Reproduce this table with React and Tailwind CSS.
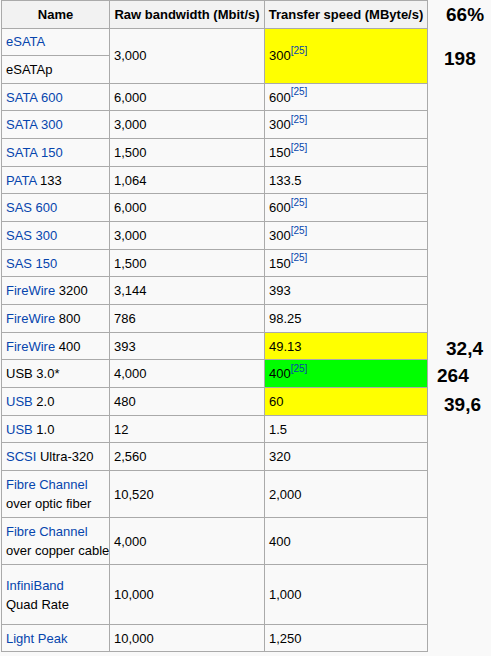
import React from "react";

const link = "text-[#0645ad]";
const cell = "border border-[#aaa] px-[4px] py-0 align-middle text-left whitespace-nowrap";
const head = "border border-[#aaa] px-[2px] py-0 align-middle text-center whitespace-nowrap bg-[#f2f2f2] font-bold";
const note = "border-0 p-0 align-middle text-[19px] font-bold leading-none text-black";

const Ref = () => (
  <sup className="relative -top-[1px] text-[10px] text-[#0645ad] align-super leading-none">[25]</sup>
);

const rows = [
  { name: <span className={link}>SATA 600</span>, raw: "6,000", speed: <>600<Ref /></> },
  { name: <span className={link}>SATA 300</span>, raw: "3,000", speed: <>300<Ref /></> },
  { name: <span className={link}>SATA 150</span>, raw: "1,500", speed: <>150<Ref /></> },
  { name: <><span className={link}>PATA</span> 133</>, raw: "1,064", speed: "133.5" },
  { name: <span className={link}>SAS 600</span>, raw: "6,000", speed: <>600<Ref /></> },
  { name: <span className={link}>SAS 300</span>, raw: "3,000", speed: <>300<Ref /></> },
  { name: <span className={link}>SAS 150</span>, raw: "1,500", speed: <>150<Ref /></> },
  { name: <><span className={link}>FireWire</span> 3200</>, raw: "3,144", speed: "393" },
  { name: <><span className={link}>FireWire</span> 800</>, raw: "786", speed: "98.25" },
  { name: <><span className={link}>FireWire</span> 400</>, raw: "393", speed: "49.13", bg: "bg-[#ffff00]", note: "32,4", pad: "pl-[18px] pt-[4px]" },
  { name: "USB 3.0*", raw: "4,000", speed: <>400<Ref /></>, bg: "bg-[#00ff00]", note: "264", pad: "pl-[9px] pt-[3px]" },
  { name: <><span className={link}>USB</span> 2.0</>, raw: "480", speed: "60", bg: "bg-[#ffff00]", note: "39,6", pad: "pl-[16px] pt-[6px]" },
  { name: <><span className={link}>USB</span> 1.0</>, raw: "12", speed: "1.5" },
  { name: <><span className={link}>SCSI</span> Ultra-320</>, raw: "2,560", speed: "320" },
];

const tall = [
  { name: <><span className={link}>Fibre Channel</span><br />over optic fiber</>, raw: "10,520", speed: "2,000", h: "h-[47px]" },
  { name: <><span className={link}>Fibre Channel</span><br />over copper cable</>, raw: "4,000", speed: "400", h: "h-[47px]" },
  { name: <><span className={link}>InfiniBand</span><br />Quad Rate</>, raw: "10,000", speed: "1,000", h: "h-[60px]" },
  { name: <span className={link}>Light Peak</span>, raw: "10,000", speed: "1,250", h: "h-[27px]" },
];

export default function App() {
  return (
    <div className="w-[491px] h-[656px] bg-[#f9f9f9] overflow-hidden" style={{ fontFamily: '"Liberation Sans", Arial, sans-serif' }}>
      <table className="ml-px border-collapse table-fixed w-[490px] text-[13px] leading-[19px] text-black">
        <colgroup>
          <col className="w-[108px]" />
          <col className="w-[155px]" />
          <col className="w-[163px]" />
          <col className="w-[64px]" />
        </colgroup>
        <tbody>
          <tr className="h-[27.5px]">
            <th className={head}>Name</th>
            <th className={head}>Raw bandwidth (Mbit/s)</th>
            <th className={head}>Transfer speed (MByte/s)</th>
            <td className={`${note} pl-[18px] pt-[1px]`}>66%</td>
          </tr>
          <tr className="h-[27.67px]">
            <td className={cell}><span className={link}>eSATA</span></td>
            <td className={cell} rowSpan={2}>3,000</td>
            <td className={`${cell} bg-[#ffff00]`} rowSpan={2}>300<Ref /></td>
            <td className={`${note} pl-[16px] pt-[5px]`} rowSpan={2}>198</td>
          </tr>
          <tr className="h-[27.67px]">
            <td className={cell}>eSATAp</td>
          </tr>
          {rows.map((r, i) => (
            <tr key={i} className="h-[27.67px]">
              <td className={cell}>{r.name}</td>
              <td className={cell}>{r.raw}</td>
              <td className={`${cell} ${r.bg || ""}`}>{r.speed}</td>
              <td className={`${note} ${r.pad || ""}`}>{r.note || ""}</td>
            </tr>
          ))}
          {tall.map((r, i) => (
            <tr key={i} className={r.h}>
              <td className={cell}>{r.name}</td>
              <td className={cell}>{r.raw}</td>
              <td className={cell}>{r.speed}</td>
              <td className={note}></td>
            </tr>
          ))}
        </tbody>
      </table>
    </div>
  );
}
